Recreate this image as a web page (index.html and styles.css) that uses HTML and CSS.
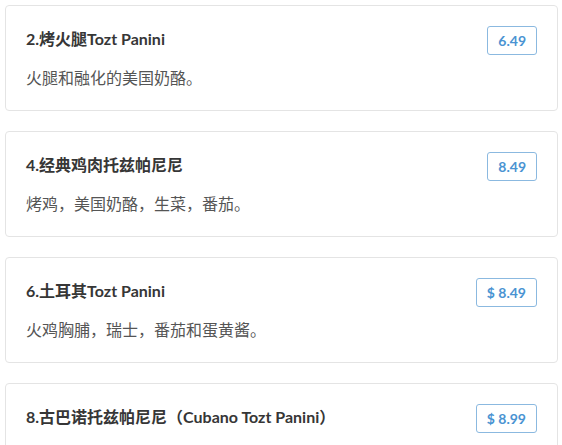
FILE: index.html
```html
<!DOCTYPE html>
<html lang="zh-CN">
<head>
    <meta charset="UTF-8">
    <title>Tozt Panini</title>
    <link rel="stylesheet" href="styles.css">
</head>
<body>
    <div class="menu-list">
        <div class="item">
            <div class="item-head">
                <h4 class="item-title">2.烤火腿Tozt Panini</h4>
                <span class="price">6.49</span>
            </div>
            <p class="item-desc">火腿和融化的美国奶酪。</p>
        </div>

        <div class="item">
            <div class="item-head">
                <h4 class="item-title">4.经典鸡肉托兹帕尼尼</h4>
                <span class="price">8.49</span>
            </div>
            <p class="item-desc">烤鸡，美国奶酪，生菜，番茄。</p>
        </div>

        <div class="item">
            <div class="item-head">
                <h4 class="item-title">6.土耳其Tozt Panini</h4>
                <span class="price">$ 8.49</span>
            </div>
            <p class="item-desc">火鸡胸脯，瑞士，番茄和蛋黄酱。</p>
        </div>

        <div class="item">
            <div class="item-head">
                <h4 class="item-title">8.古巴诺托兹帕尼尼（Cubano Tozt Panini）</h4>
                <span class="price">$ 8.99</span>
            </div>
        </div>
    </div>
</body>
</html>
```

FILE: styles.css
```css
body {
    margin: 5px 4px 5px 5px;
    font-family: Lato, "Noto Sans CJK SC", sans-serif;
    background-color: #fff;
    color: #333;
}

.menu-list {
    display: flex;
    flex-direction: column;
    gap: 20px;
}

.item {
    border: 1px solid #e4e4e4;
    border-radius: 4px;
    padding: 20px 20px 21px;
}

.item-head {
    display: flex;
    justify-content: space-between;
    align-items: flex-start;
}

.item-title {
    margin: 2px 0 0;
    font-size: 16px;
    line-height: 22px;
    font-weight: bold;
    color: #363636;
}

.price {
    border: 1px solid #8bb9e0;
    border-radius: 3px;
    padding: 5px 10px;
    font-size: 14px;
    line-height: 17px;
    font-weight: bold;
    color: #4a93d2;
}

.item-desc {
    margin: 12px 0 0;
    font-size: 16px;
    line-height: 22px;
    color: #555;
}
```
